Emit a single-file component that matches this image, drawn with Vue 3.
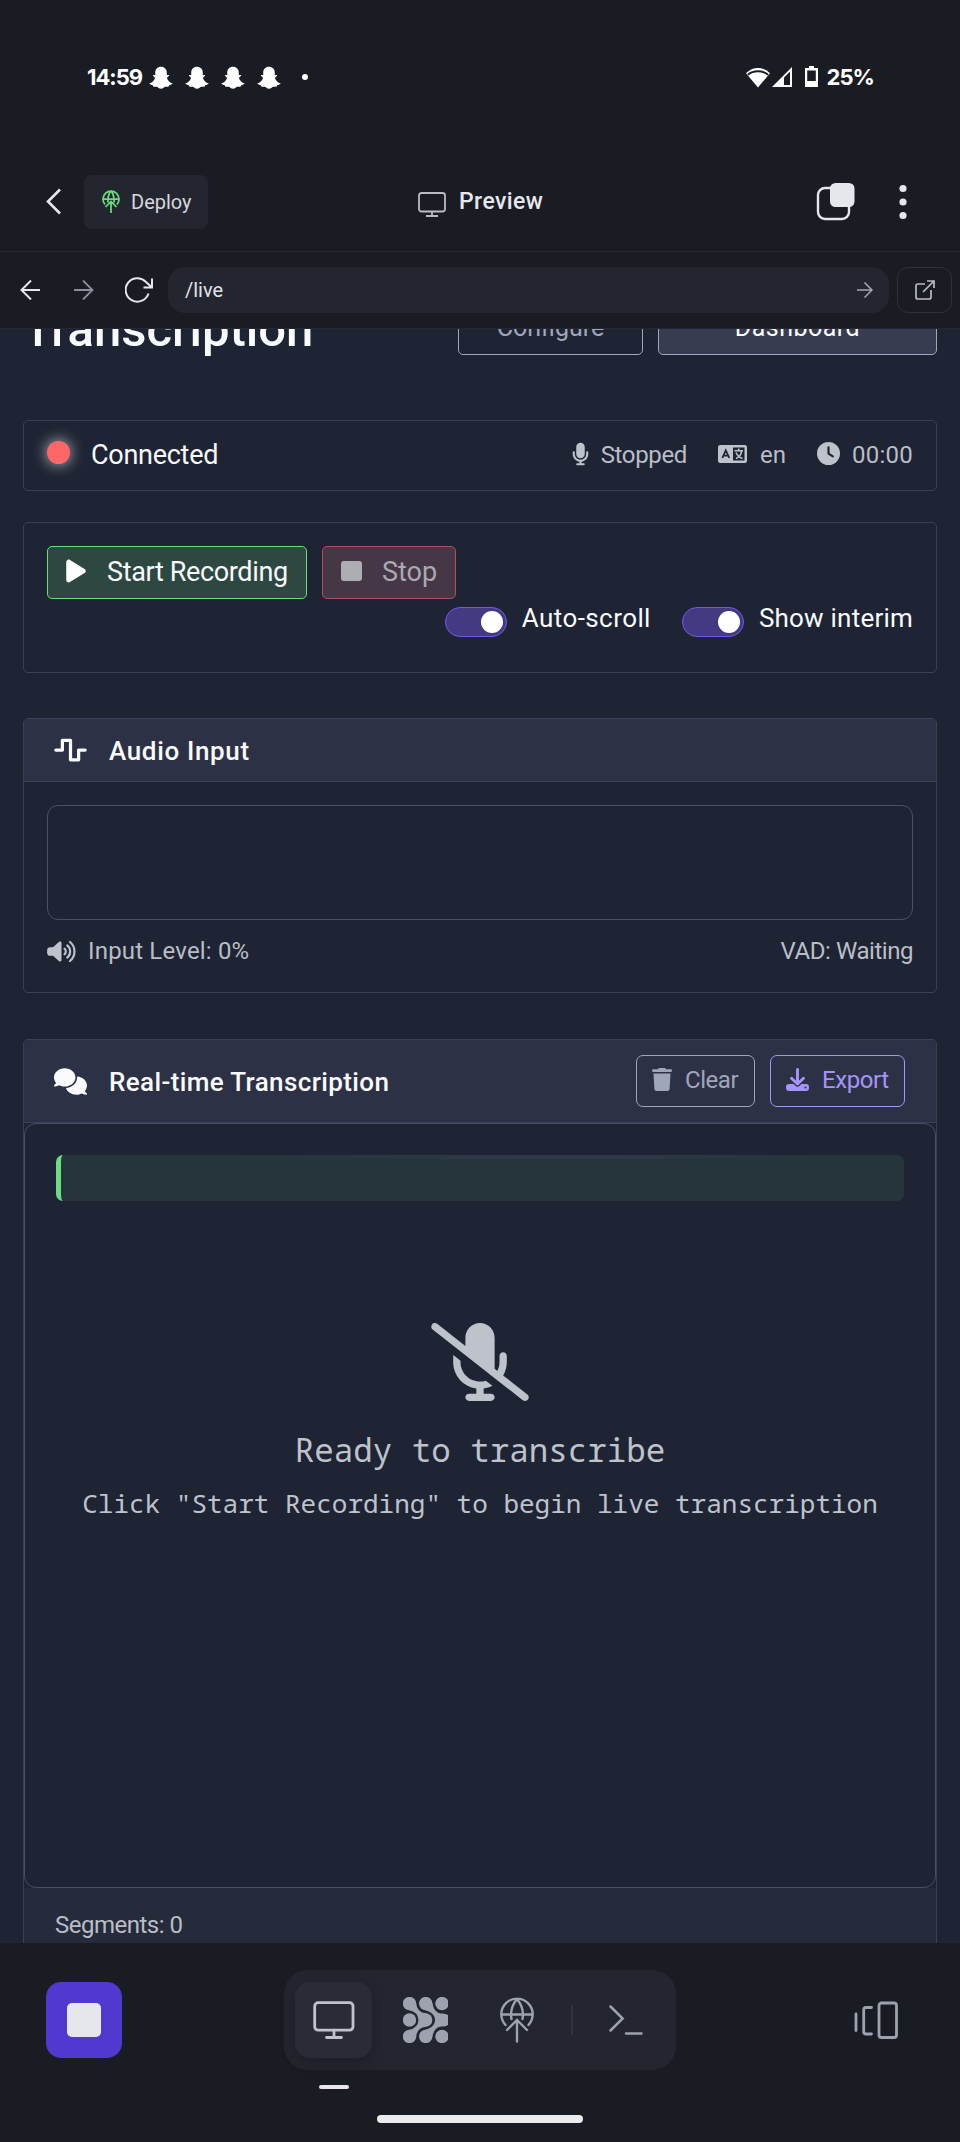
<script setup>
const ghosts = [1, 2, 3, 4]
const toggles = [
  { label: 'Auto-scroll', cls: 'auto' },
  { label: 'Show interim', cls: 'interim' },
]
</script>

<template>
  <div class="phone">
    <div class="status">
      <span class="time">14:59</span>
      <svg v-for="g in ghosts" :key="g" class="ghost" viewBox="0 0 24 24"><path d="M12 .8c3.5 0 5.8 2.500 5.800 6v2.300c.8.3 2-.5 2.300.3.3.9-1.600 1.300-1.900 2.100-.5 1.600 2.200 5 5.100 5.700.8.3-.1 1.500-3 2-.5.200-.3 1.500-1 1.600-.9.200-2-.3-3.200 0-1.300.400-2.100 2-4.100 2s-2.800-1.600-4.100-2c-1.200-.3-2.300.2-3.200 0-.7-.1-.5-1.400-1-1.600-2.900-.5-3.800-1.700-3-2 2.900-.7 5.600-4.100 5.100-5.700-.3-.8-2.200-1.200-1.900-2.100.3-.8 1.500 0 2.300-.3V6.800c0-3.500 2.300-6 5.800-6z" fill="#fff"/></svg>
      <i class="more-dot"></i>
      <div class="sys">
        <svg width="24" height="21" viewBox="0 0 24 21"><path d="M12 20.500 0 6.200C6.500-.9 17.500-.9 24 6.200z" fill="#fff"/><path d="M1.800 7.200C7.500 2.600 16.500 2.600 22.200 7.200" transform="translate(0 .6)" fill="none" stroke="#1a1c24" stroke-width="2"/></svg>
        <svg width="20" height="20" viewBox="0 0 20 20"><path d="M20 0v20H0z" fill="#fff"/><path d="M12 10.500 18 4.500V18h-6z" fill="#1a1c24"/></svg>
        <svg class="bat" width="13" height="21" viewBox="0 0 13 21"><path d="M4 0h5v2h4v19H0V2h4z" fill="#fff"/><path d="M2.200 4.500h8.600V15H2.200z" fill="#1a1c24"/></svg>
        <span class="pct">25%</span>
      </div>
    </div>

    <header class="appbar">
      <svg class="chev" width="16" height="27" viewBox="0 0 16 27"><path d="M14 1.500 2 13.500 14 25.500" fill="none" stroke="#e6e7ec" stroke-width="2.600"/></svg>
      <button class="deploy">
        <svg width="18" height="24" viewBox="0 0 36 48" fill="none" stroke="#6bdc7f" stroke-width="3.500"><path d="M6 29A16 16 0 1 1 30 29M2 18H34M12 25Q11 10 18 2Q25 10 24 25M18 46V24M7 34 18 23 29 34"/></svg>
        <span>Deploy</span>
      </button>
      <div class="heading">
        <svg width="28" height="25" viewBox="0 0 28 25" fill="none" stroke="#b9bcc7" stroke-width="1.800"><rect x="1" y="1" width="26" height="18.500" rx="2.500"/><path d="M14 19.500V23.500M8 24H20"/></svg>
        <span>Preview</span>
      </div>
      <svg class="tabs" width="39" height="38" viewBox="0 0 39 38"><rect x="2" y="5" width="31" height="31" rx="7" fill="none" stroke="#e6e7ec" stroke-width="2.400"/><rect x="14" y="0" width="24.500" height="24" rx="5.500" fill="#e6e7ec"/></svg>
      <svg class="kebab" width="8" height="36" viewBox="0 0 8 36" fill="#e6e7ec"><circle cx="4" cy="4.500" r="3.600"/><circle cx="4" cy="18" r="3.600"/><circle cx="4" cy="31.500" r="3.600"/></svg>
    </header>

    <nav class="urlbar">
      <svg class="nav-back" width="20" height="20" viewBox="0 0 20 20" fill="none" stroke="#e6e7ec" stroke-width="2"><path d="M20 10H1.500M11 .5 1.500 10 11 19.500"/></svg>
      <svg class="nav-fwd" width="20" height="20" viewBox="0 0 20 20" fill="none" stroke="#8d909c" stroke-width="1.800"><path d="M0 10H18.500M9 .5 18.500 10 9 19.500"/></svg>
      <svg class="nav-reload" width="28" height="26" viewBox="0 0 28 26" fill="none" stroke="#e6e7ec" stroke-width="2"><path d="M23.500 16.500A11.700 11.700 0 1 1 20.500 4.500L26.500 10M27 1.500V10.500H18.500"/></svg>
      <div class="url">
        <span>/live</span>
        <svg width="16" height="16" viewBox="0 0 16 16" fill="none" stroke="#a5a8b3" stroke-width="1.500"><path d="M0 8H15M7.500 .5 15 8 7.500 15.500"/></svg>
      </div>
      <div class="external">
        <svg width="20" height="20" viewBox="0 0 20 20" fill="none" stroke="#b9bcc7" stroke-width="1.700"><path d="M10 4H3Q1 4 1 6V17Q1 19 3 19H14Q16 19 16 17V10M12 1H19V8M19 1 8 12"/></svg>
      </div>
    </nav>

    <main class="page">
      <div class="hero">
        <h1>Transcription</h1>
        <div class="hbtn configure"><span>Configure</span></div>
        <div class="hbtn dashboard"><span>Dashboard</span></div>
      </div>

      <section class="card conn">
        <i class="led"></i>
        <span class="conn-text">Connected</span>
        <div class="facts">
          <svg width="17" height="24" viewBox="0 0 384 512"><path fill="#bec2cb" d="M192 0C139 0 96 43 96 96V256c0 53 43 96 96 96s96-43 96-96V96c0-53-43-96-96-96zM64 216c0-13.300-10.700-24-24-24s-24 10.700-24 24v40c0 89.100 66.200 162.700 152 174.400V464H120c-13.300 0-24 10.700-24 24s10.700 24 24 24h144c13.300 0 24-10.700 24-24s-10.700-24-24-24H216V430.400c85.800-11.700 152-85.300 152-174.400V216c0-13.300-10.700-24-24-24s-24 10.700-24 24v40c0 70.700-57.300 128-128 128s-128-57.300-128-128V216z"/></svg>
          <span class="f-stopped">Stopped</span>
          <svg class="lang" width="29" height="18" viewBox="0 0 29 18"><rect width="29" height="18" rx="2.200" fill="#bec2cb"/><path d="M15 2.500H26.500V15.500H15z" fill="#1e2433"/><path d="M4.300 13 7.800 5.300 11.300 13M5.600 10.600H10" fill="none" stroke="#1e2433" stroke-width="1.800"/><path d="M16.500 5.800H25M20.700 3.500V5.800M18 13.500Q23 11.500 23.600 6M18 7.500Q20 12 24.500 13.500" fill="none" stroke="#bec2cb" stroke-width="1.600"/></svg>
          <span class="f-en">en</span>
          <svg class="clock" width="23" height="23" viewBox="0 0 512 512"><path fill="#bec2cb" fill-rule="evenodd" d="M256 0a256 256 0 1 1 0 512A256 256 0 1 1 256 0zM232 120V256c0 8 4 15.500 10.700 20l96 64c11 7.400 25.900 4.400 33.300-6.700s4.400-25.900-6.700-33.300L280 243.200V120c0-13.300-10.700-24-24-24s-24 10.700-24 24z"/></svg>
          <span class="f-time">00:00</span>
        </div>
      </section>

      <section class="card controls">
        <div class="ctrl-row">
          <button class="start">
            <svg width="20" height="26" viewBox="0 0 384 512"><path fill="#fff" d="M73 39c-14.800-9.100-33.400-9.400-48.500-.9S0 62.600 0 80V432c0 17.400 9.400 33.400 24.500 41.900s33.700 8.100 48.500-.9L361 297c14.300-8.700 23-24.200 23-41s-8.700-32.200-23-41L73 39z"/></svg>
            <span>Start Recording</span>
          </button>
          <button class="stop"><i></i><span>Stop</span></button>
        </div>
        <div class="toggles">
          <label v-for="t in toggles" :key="t.label" :class="['toggle', t.cls]">
            <i class="switch"><b></b></i><span>{{ t.label }}</span>
          </label>
        </div>
      </section>

      <section class="card audio">
        <div class="card-head">
          <svg width="33" height="26" viewBox="0 0 640 512"><path fill="#f8fafc" d="M128 64c0-17.700 14.300-32 32-32H320c17.700 0 32 14.300 32 32V416h96V256c0-17.700 14.300-32 32-32H608c17.700 0 32 14.300 32 32s-14.300 32-32 32H512V448c0 17.700-14.300 32-32 32H320c-17.700 0-32-14.300-32-32V96H192V256c0 17.700-14.300 32-32 32H32c-17.700 0-32-14.300-32-32s14.300-32 32-32h96V64z"/></svg>
          <h2 class="t-audio">Audio Input</h2>
        </div>
        <div class="wave"></div>
        <div class="levels">
          <svg width="29" height="23" viewBox="0 0 640 512"><path fill="#bec2cb" d="M301.100 34.800C312.600 40 320 51.400 320 64V448c0 12.600-7.400 24-18.900 29.200s-25 3.100-34.400-5.300L131.800 352H64c-35.300 0-64-28.700-64-64V224c0-35.300 28.700-64 64-64h67.800L266.700 40.100c9.400-8.400 22.900-10.400 34.400-5.300z"/><path d="M388 194Q416 218 416 256T388 318M448 119Q512 171 512 256T448 393M509 44Q608 125 608 256T509 468" fill="none" stroke="#bec2cb" stroke-width="48" stroke-linecap="round"/></svg>
          <span class="lvl">Input Level: 0%</span>
          <span class="vad">VAD: Waiting</span>
        </div>
      </section>

      <section class="card trans">
        <div class="card-head tall">
          <svg width="33" height="27" viewBox="0 0 640 512"><path fill="#f8fafc" d="M208 352c114.900 0 208-78.800 208-176S322.900 0 208 0S0 78.800 0 176c0 38.600 14.700 74.300 39.600 103.400c-3.500 9.400-8.700 17.700-14.200 24.700c-4.800 6.200-9.700 11-13.300 14.300c-1.800 1.600-3.300 2.900-4.300 3.700l-1.300 1C1 327.200-1.400 334.400 .8 340.900S9.100 352 16 352c21.800 0 43.800-5.600 62.100-12.500c9.200-3.500 17.800-7.400 25.200-11.400C134.100 343.300 169.800 352 208 352zM448 176c0 112.300-99.100 196.900-216.500 207C255.800 457.400 336.400 512 432 512c38.200 0 73.900-8.700 104.700-23.900c7.500 4 16 7.900 25.200 11.400c18.300 6.900 40.300 12.500 62.100 12.500c6.900 0 13.100-4.500 15.200-11.100c2.100-6.600-.2-13.800-5.800-17.900l-1.300-1c-1-.8-2.500-2-4.300-3.700c-3.600-3.300-8.500-8.100-13.300-14.300c-5.500-7-10.700-15.400-14.200-24.700c24.900-29 39.600-64.700 39.600-103.400c0-92.800-84.900-168.900-192.600-175.500c.4 5.100 .6 10.300 .6 15.500z"/></svg>
          <h2 class="t-real">Real-time Transcription</h2>
          <button class="sm clear">
            <svg width="20" height="23" viewBox="0 0 20 23" fill="#a0a6b9"><path d="M6 1.200Q6.400 0 7.500 0H12.500Q13.600 0 14 1.200H19Q20 1.300 20 2.500T19 4H1Q0 3.800 0 2.500T1 1.200zM1.500 5.500H18.500L17.600 21Q17.400 23 15.500 23H4.500Q2.600 23 2.400 21z"/></svg>
            <span>Clear</span>
          </button>
          <button class="sm export">
            <svg width="23" height="23" viewBox="0 0 23 23"><path d="M11.500 1.500V15M5.500 10.200 11.500 16 17.500 10.200" fill="none" stroke="#a594f9" stroke-width="2.900" stroke-linecap="round" stroke-linejoin="round"/><path d="M3 16H7.500L10 18.300Q11.500 19.400 13 18.300L15.500 16H20Q23 16 23 19V20Q23 23 20 23H3Q0 23 0 20V19Q0 16 3 16z" fill="#a594f9"/><circle cx="19.500" cy="19.500" r="1.100" fill="#2d3145"/></svg>
            <span>Export</span>
          </button>
        </div>
        <div class="transcript">
          <div class="live-line"></div>
          <svg class="mic-off" width="98" height="78" viewBox="0 0 640 512"><path fill="#bec2cb" d="M38.800 5.100C28.400-3.100 13.300-1.200 5.100 9.200S-1.200 34.700 9.200 42.900l592 464c10.400 8.200 25.500 6.300 33.700-4.100s6.300-25.500-4.100-33.700L472.100 344.700c15.200-26 23.900-56.300 23.900-88.700V216c0-13.300-10.700-24-24-24s-24 10.700-24 24v40c0 21.200-5.100 41.100-14.200 58.700L416 300.800V96c0-53-43-96-96-96s-96 43-96 96v54.300L38.800 5.100zM344 430.400c20.400-2.800 39.700-9.100 57.300-18.200l-43.100-33.900C346.100 382 333.300 384 320 384c-70.700 0-128-57.300-128-128v-8.700L144.700 210c-.5 1.900-.7 3.900-.7 6v40c0 89.100 66.200 162.700 152 174.400V464H248c-13.300 0-24 10.700-24 24s10.700 24 24 24h144c13.300 0 24-10.700 24-24s-10.700-24-24-24H344V430.400z"/></svg>
          <p class="ready">Ready to transcribe</p>
          <p class="hint">Click "Start Recording" to begin live transcription</p>
        </div>
        <div class="foot"><span>Segments: 0</span></div>
      </section>
    </main>

    <footer class="dock">
      <div class="dock-row">
        <div class="halt"><i></i></div>
        <div class="pill">
          <div class="active">
            <svg width="42" height="39" viewBox="0 0 42 39" fill="none" stroke="#c0c3cc" stroke-width="2.800" stroke-linecap="round"><rect x="1.700" y="1.700" width="38.300" height="27.500" rx="3.500"/><path d="M21 29.200V36.500M13.500 36.500H28.500"/></svg>
          </div>
          <svg class="cells" width="45" height="46" viewBox="0 0 45 46" fill="#9da2ae">
            <circle cx="6.500" cy="6.500" r="6.700"/><circle cx="22.700" cy="6.500" r="6.700"/><circle cx="39" cy="6.500" r="6.700"/><circle cx="6.500" cy="23" r="6.700"/><circle cx="22.700" cy="23" r="6.700"/><circle cx="6.500" cy="39.500" r="6.700"/><circle cx="22.700" cy="39.500" r="6.700"/><circle cx="39" cy="39.500" r="6.700"/>
            <path d="M45 18V28Q42 30 38 29.500Q31 30.500 29.500 39.500L22 32.800Q29 31 31 27Q33 23 31 19Q29 15 22 13.200L29.500 6.500Q31 15.500 38 16.500Q42 16 45 18z"/>
            <path d="M13.200 6.500Q14 15.500 23 16.300V29.700Q14 30.500 13.200 39.500L6 32.800Q15 31 15.500 23Q15 15 6 13.200z"/>
          </svg>
          <svg class="globe" width="34" height="46" viewBox="0 0 34 46" fill="none" stroke="#9da2ae" stroke-width="2.400" stroke-linecap="round"><path d="M5.500 28A15.700 15.700 0 1 1 28.500 28M1.500 17.500H32.500M11.500 22Q9.500 11 17 2Q24.500 11 22.500 22M17 44.500V23M7 33 17 23 27 33"/></svg>
          <i class="divider"></i>
          <svg class="term" width="34" height="30" viewBox="0 0 34 30" fill="none" stroke="#9da2ae" stroke-width="2.500" stroke-linecap="round"><path d="M1.500 1.500 13.700 13.500 1.500 25.500M17 28.500H32.500"/></svg>
        </div>
        <svg class="device" width="44" height="39" viewBox="0 0 44 39" fill="none" stroke="#9da2ae" stroke-width="2.800" stroke-linecap="round"><path d="M2 13V29.500M17.500 6.500H12Q9.700 6.500 9.700 9V30.500Q9.700 33 12 33H17.500"/><rect x="25" y="2" width="17.500" height="34.500" rx="2.500"/></svg>
      </div>
      <i class="marker"></i>
      <i class="homebar"></i>
    </footer>
  </div>
</template>

<style>
body { margin: 0; background: #1a1c24; }
</style>

<style scoped>
* { box-sizing: border-box; }
.phone { width: 960px; height: 2142px; background: #1a1c24; font-family: Roboto, "Noto Sans", sans-serif; overflow: hidden; color: #f8fafc; display: flex; flex-direction: column; }
svg, i, b { display: block; flex: none; }
span, h1, h2, p { white-space: nowrap; }
h1, h2, p { margin: 0; }
button { font: inherit; padding: 0; background: none; cursor: pointer; }

.status { height: 152px; flex: none; padding: 0 86px 0 87px; display: flex; align-items: flex-start; }
.time, .pct { font: 700 22px/28px Inter, sans-serif; letter-spacing: -1px; margin-top: 63px; color: #fff; }
.pct { letter-spacing: -.9px; }
.time { width: 62px; }
.ghost { width: 24px; height: 24px; margin: 66px 12px 0 0; }
.more-dot { width: 6px; height: 6px; border-radius: 50%; background: #fff; margin: 74px 0 0 9px; }
.sys { margin-left: auto; display: flex; align-items: flex-start; }
.sys svg { margin: 67px 2px 0 0; }
.sys svg.bat { margin: 66px 8px 0 11px; }

.appbar { height: 100px; flex: none; border-bottom: 1px solid #252734; display: flex; align-items: center; padding: 0 53px 0 46px; position: relative; }
.deploy { width: 124px; height: 54px; margin-left: 22px; border: 0; border-radius: 8px; background: #24262f; color: #d5d7de; display: flex; align-items: center; padding: 0 0 0 18px; font-size: 20px; }
.deploy span { margin-left: 11px; }
.heading { position: absolute; left: 418px; top: 36px; display: flex; align-items: center; color: #e6e7ec; font: 500 23px/28px Roboto, sans-serif; letter-spacing: .4px; }
.heading svg { margin-top: 4px; }
.heading span { margin: -1px 0 0 13px; }
.tabs { margin-left: auto; }
.kebab { margin-left: 44px; }

.urlbar { height: 77px; flex: none; border-bottom: 1px solid #252734; display: flex; align-items: center; padding: 0 8px 0 20px; }
.nav-fwd { margin-left: 34px; }
.nav-reload { margin-left: 31px; }
.url { flex: 1; height: 46px; margin-left: 15px; background: #24262f; border-radius: 17px; display: flex; align-items: center; justify-content: space-between; padding: 0 16px 0 17px; font-size: 20px; color: #e0e2e8; }
.external { width: 55px; height: 46px; margin-left: 8px; border: 1px solid #2e303d; border-radius: 11px; display: flex; align-items: center; justify-content: center; }

.page { height: 1614px; flex: none; background: #1e2433; padding: 0 23px; overflow: hidden; }
.hero { height: 26px; display: flex; align-items: flex-end; }
h1 { font: 500 49px/60px Roboto, sans-serif; margin: 0 auto -5px 6px; width: 300px; text-indent: -6px; }
.hbtn { flex: none; height: 56px; border: 1px solid #a0a6b9; border-radius: 5px; display: flex; justify-content: center; font-size: 25px; line-height: 56px; }
.configure { width: 185px; color: #a0a6b9; }
.dashboard { width: 279px; margin-left: 15px; background: #383c50; color: #fff; letter-spacing: .5px; }

.card { border: 1px solid #394157; border-radius: 5px; }
.conn { height: 71px; margin-top: 65px; display: flex; align-items: center; padding: 0 23px; }
.led { width: 23px; height: 23px; border-radius: 50%; background: #ff6767; box-shadow: 0 0 15px rgba(255,255,255,.75); margin-top: -6px; }
.conn-text { font-size: 27px; letter-spacing: -.27px; margin: -2px 0 0 21px; }
.facts { margin-left: auto; display: flex; align-items: center; color: #b9bec6; font-size: 24px; }
.facts svg { margin-top: -4px; }
.facts span { margin-top: -2px; }
.f-stopped { margin-left: 12px; letter-spacing: -.35px; }
.lang { margin-left: 31px; }
.f-en { margin-left: 13px; }
.clock { margin-left: 31px; }
.f-time { margin-left: 12px; letter-spacing: .25px; }

.controls { height: 151px; margin-top: 31px; padding: 23px; }
.ctrl-row { display: flex; }
.start, .stop { height: 53px; border: 1px solid #6bdc7f; background: #2d4841; border-radius: 5px; display: flex; align-items: center; color: #f8fafc; font-size: 27px; padding-bottom: 3px; }
.start { width: 260px; padding-left: 18px; }
.start span { margin: 2px 0 0 21px; letter-spacing: -.36px; }
.stop { width: 134px; margin-left: 15px; border-color: #b34f55; background: #453745; color: #a9a9b2; padding-left: 18px; }
.stop i { width: 21px; height: 20px; border-radius: 3px; background: #adaeb4; }
.stop span { margin: 2px 0 0 20px; }
.toggles { display: flex; justify-content: flex-end; margin-top: 3px; font-size: 26px; line-height: 32px; }
.toggle { display: flex; }
.auto { letter-spacing: .42px; }
.interim { margin-left: 31px; letter-spacing: .22px; }
.switch { width: 62px; height: 30px; border: 1px solid #7257ee; background: #433a83; border-radius: 15px; display: flex; justify-content: flex-end; padding: 3px; margin: 5px 15px 0 0; }
.switch b { width: 22px; height: 22px; border-radius: 50%; background: #fff; }

.audio { height: 275px; margin-top: 45px; }
.card-head { height: 63px; background: #2d3145; border-bottom: 1px solid #394157; border-radius: 4px 4px 0 0; display: flex; align-items: center; padding: 0 31px 0 30px; }
.card-head h2 { font: 500 26px/32px Roboto, sans-serif; margin: 1px 0 0 22px; letter-spacing: .65px; }
.card-head h2.t-real { letter-spacing: .38px; }
.wave { height: 115px; margin: 23px 23px 0; border: 1px solid #4a5062; border-radius: 11px; }
.levels { display: flex; align-items: center; margin: 15px 23px 0; height: 32px; font-size: 24px; color: #b9bec6; }
.lvl { margin-left: 12px; letter-spacing: .18px; }
.vad { margin-left: auto; letter-spacing: -.45px; }

.trans { height: 920px; margin-top: 46px; }
.card-head.tall { height: 83px; }
.sm { height: 52px; border: 1px solid #a0a6b9; border-radius: 7px; color: #a0a6b9; display: flex; align-items: center; padding: 0 0 3px 15px; font-size: 24px; letter-spacing: -.45px; }
.clear { width: 119px; margin-left: auto; }
.export { width: 135px; margin-left: 15px; border-color: #a594f9; color: #a594f9; }
.sm span { margin: 1px 0 0 13px; }
.transcript { height: 765px; border: 1px solid #4a5062; border-radius: 12px; padding: 31px; display: flex; flex-direction: column; align-items: center; color: #bec2cb; font-family: "Noto Sans Mono", "DejaVu Sans Mono", monospace; }
.live-line { align-self: stretch; height: 46px; border-left: 5px solid #6bdc7f; border-radius: 7px; background: linear-gradient(90deg, transparent 20%, #2d3849 55%, #2d3849 65%, transparent 90%) 0 0 / 100% 4px no-repeat #25353b; }
.mic-off { margin-top: 122px; }
.ready { font-size: 32.500px; line-height: 44px; margin-top: 27px; }
.hint { font-size: 26px; line-height: 36px; margin-top: 13px; }
.foot { background: #252b3a; height: 70px; padding: 20px 31px; color: #b9bec6; font-size: 24px; line-height: 34px; letter-spacing: -.5px; }

.dock { flex: 1; position: relative; padding-top: 27px; }
.dock-row { display: flex; align-items: center; padding: 0 62px 0 46px; height: 100px; }
.halt { width: 76px; height: 76px; border-radius: 15px; background: #5138ce; display: flex; align-items: center; justify-content: center; }
.halt i { width: 34px; height: 34px; border-radius: 5px; background: #e6e7ec; }
.pill { width: 392px; height: 100px; margin-left: 162px; border-radius: 24px; background: #24262f; display: flex; align-items: center; padding-left: 11px; }
.active { width: 77px; height: 76px; border-radius: 15px; background: #2a2b37; box-shadow: 0 4px 14px rgba(15,17,24,.4); display: flex; align-items: center; justify-content: center; }
.cells { margin-left: 31px; }
.globe { margin-left: 52px; }
.divider { width: 2px; height: 30px; background: #303240; margin-left: 37px; }
.term { margin-left: 36px; }
.device { margin-left: auto; }
.marker { width: 30px; height: 4px; border-radius: 2px; background: #eae6f0; margin: 15px 0 0 319px; }
.homebar { width: 206px; height: 8px; border-radius: 4px; background: #ececec; margin: 26px auto 0; }
</style>
